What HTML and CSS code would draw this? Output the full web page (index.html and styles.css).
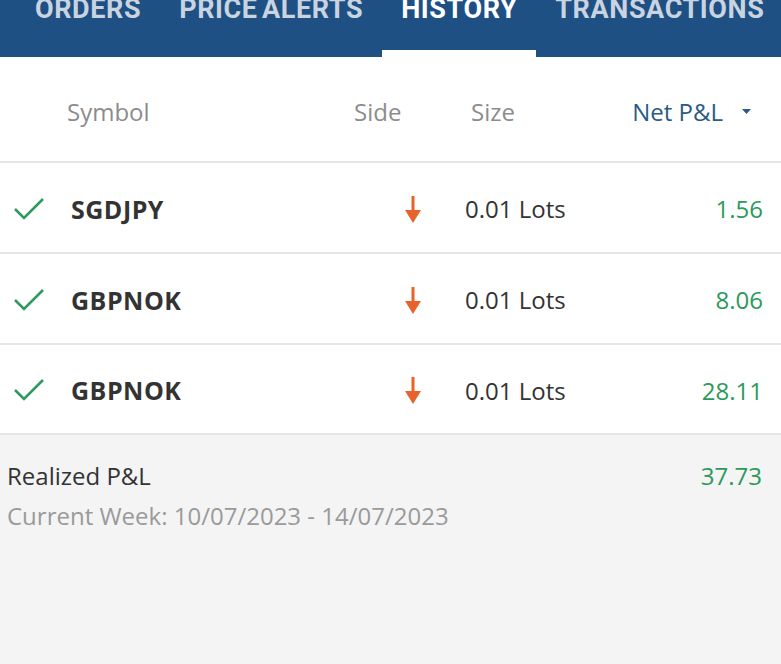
FILE: index.html
```html
<!DOCTYPE html>
<html>
<head>
<meta charset="utf-8">
<link rel="stylesheet" href="styles.css">
</head>
<body>
<nav class="tabs">
  <div class="tab">ORDERS</div>
  <div class="tab">PRICE ALERTS</div>
  <div class="tab active">HISTORY</div>
  <div class="tab">TRANSACTIONS</div>
</nav>
<main class="panel">
  <div class="head">
    <span class="h-symbol">Symbol</span>
    <span class="h-side">Side</span>
    <span class="h-size">Size</span>
    <span class="h-pnl">Net P&amp;L <svg class="caret" width="9" height="5" viewBox="0 0 9 5"><polygon points="0,0 9,0 4.5,5" fill="#2c5a85"/></svg></span>
  </div>
  <div class="row">
    <svg class="check" width="32" height="24" viewBox="0 0 32 24"><polyline points="2,12 11,21 30,2" fill="none" stroke="#2e9a5c" stroke-width="2.6"/></svg>
    <span class="sym">SGDJPY</span>
    <svg class="arrow" width="16" height="28" viewBox="0 0 16 28"><rect x="6.5" y="0" width="3" height="16" fill="#e8622c"/><polygon points="0,14 16,14 8,27" fill="#e8622c"/></svg>
    <span class="lots">0.01 Lots</span>
    <span class="val">1.56</span>
  </div>
  <div class="row">
    <svg class="check" width="32" height="24" viewBox="0 0 32 24"><polyline points="2,12 11,21 30,2" fill="none" stroke="#2e9a5c" stroke-width="2.6"/></svg>
    <span class="sym">GBPNOK</span>
    <svg class="arrow" width="16" height="28" viewBox="0 0 16 28"><rect x="6.5" y="0" width="3" height="16" fill="#e8622c"/><polygon points="0,14 16,14 8,27" fill="#e8622c"/></svg>
    <span class="lots">0.01 Lots</span>
    <span class="val">8.06</span>
  </div>
  <div class="row last">
    <svg class="check" width="32" height="24" viewBox="0 0 32 24"><polyline points="2,12 11,21 30,2" fill="none" stroke="#2e9a5c" stroke-width="2.6"/></svg>
    <span class="sym">GBPNOK</span>
    <svg class="arrow" width="16" height="28" viewBox="0 0 16 28"><rect x="6.5" y="0" width="3" height="16" fill="#e8622c"/><polygon points="0,14 16,14 8,27" fill="#e8622c"/></svg>
    <span class="lots">0.01 Lots</span>
    <span class="val">28.11</span>
  </div>
  <section class="summary">
    <div class="sum-line">
      <span class="sum-label">Realized P&amp;L</span>
      <span class="sum-val">37.73</span>
    </div>
    <div class="week">Current Week: 10/07/2023 - 14/07/2023</div>
  </section>
</main>
</body>
</html>
```
FILE: styles.css
```css
html, body {
  margin: 0;
  padding: 0;
  background: #f4f4f4;
  font-family: "Open Sans", "Liberation Sans", sans-serif;
}
.tabs {
  display: flex;
  height: 57px;
  background: #1e5083;
  padding-left: 16px;
  box-sizing: border-box;
  overflow: hidden;
}
.tab {
  position: relative;
  padding: 0 19px;
  margin-top: -4px;
  font-family: Roboto, "Liberation Sans", sans-serif;
  font-weight: 700;
  font-size: 27px;
  line-height: 26px;
  letter-spacing: 0.6px;
  word-spacing: -3px;
  color: #c9d4e0;
  white-space: nowrap;
  height: 61px;
}
.tab.active {
  color: #ffffff;
}
.tab.active::after {
  content: "";
  position: absolute;
  left: 0;
  right: 0;
  bottom: 0;
  height: 7px;
  background: #ffffff;
}
.panel {
  background: #ffffff;
}
.head {
  display: flex;
  align-items: center;
  height: 106px;
  box-sizing: border-box;
  padding-top: 4px;
  border-bottom: 2px solid #e6e6e6;
  font-size: 24px;
  color: #8c8c8c;
}
.h-symbol {
  margin-left: 67px;
  width: 287px;
}
.h-side {
  width: 117px;
}
.h-size {
  flex: 1;
}
.h-pnl {
  color: #2c5a85;
  margin-right: 30px;
  display: flex;
  align-items: center;
  gap: 19px;
}
.row {
  display: flex;
  align-items: center;
  height: 87px;
  border-bottom: 2px solid #e6e6e6;
  padding: 2px 18px 0 13px;
  font-size: 24px;
  color: #333333;
}
.row.last {
  height: 86px;
}
.check {
  width: 32px;
  margin-right: 26px;
  flex: none;
}
.sym {
  font-weight: 700;
  font-size: 25px;
  width: 334px;
  letter-spacing: 0.5px;
}
.arrow {
  flex: none;
  margin-top: 2px;
}
.lots {
  margin-left: 44px;
  flex: 1;
}
.val {
  color: #2a9a5a;
}
.summary {
  background: #f4f4f4;
  padding: 25px 19px 20px 7px;
}
.sum-line {
  display: flex;
  justify-content: space-between;
  font-size: 24px;
  line-height: 32px;
  color: #333333;
}
.sum-val {
  color: #2a9a5a;
}
.week {
  margin-top: 8px;
  font-size: 24px;
  line-height: 32px;
  color: #9a9a9a;
}
```
